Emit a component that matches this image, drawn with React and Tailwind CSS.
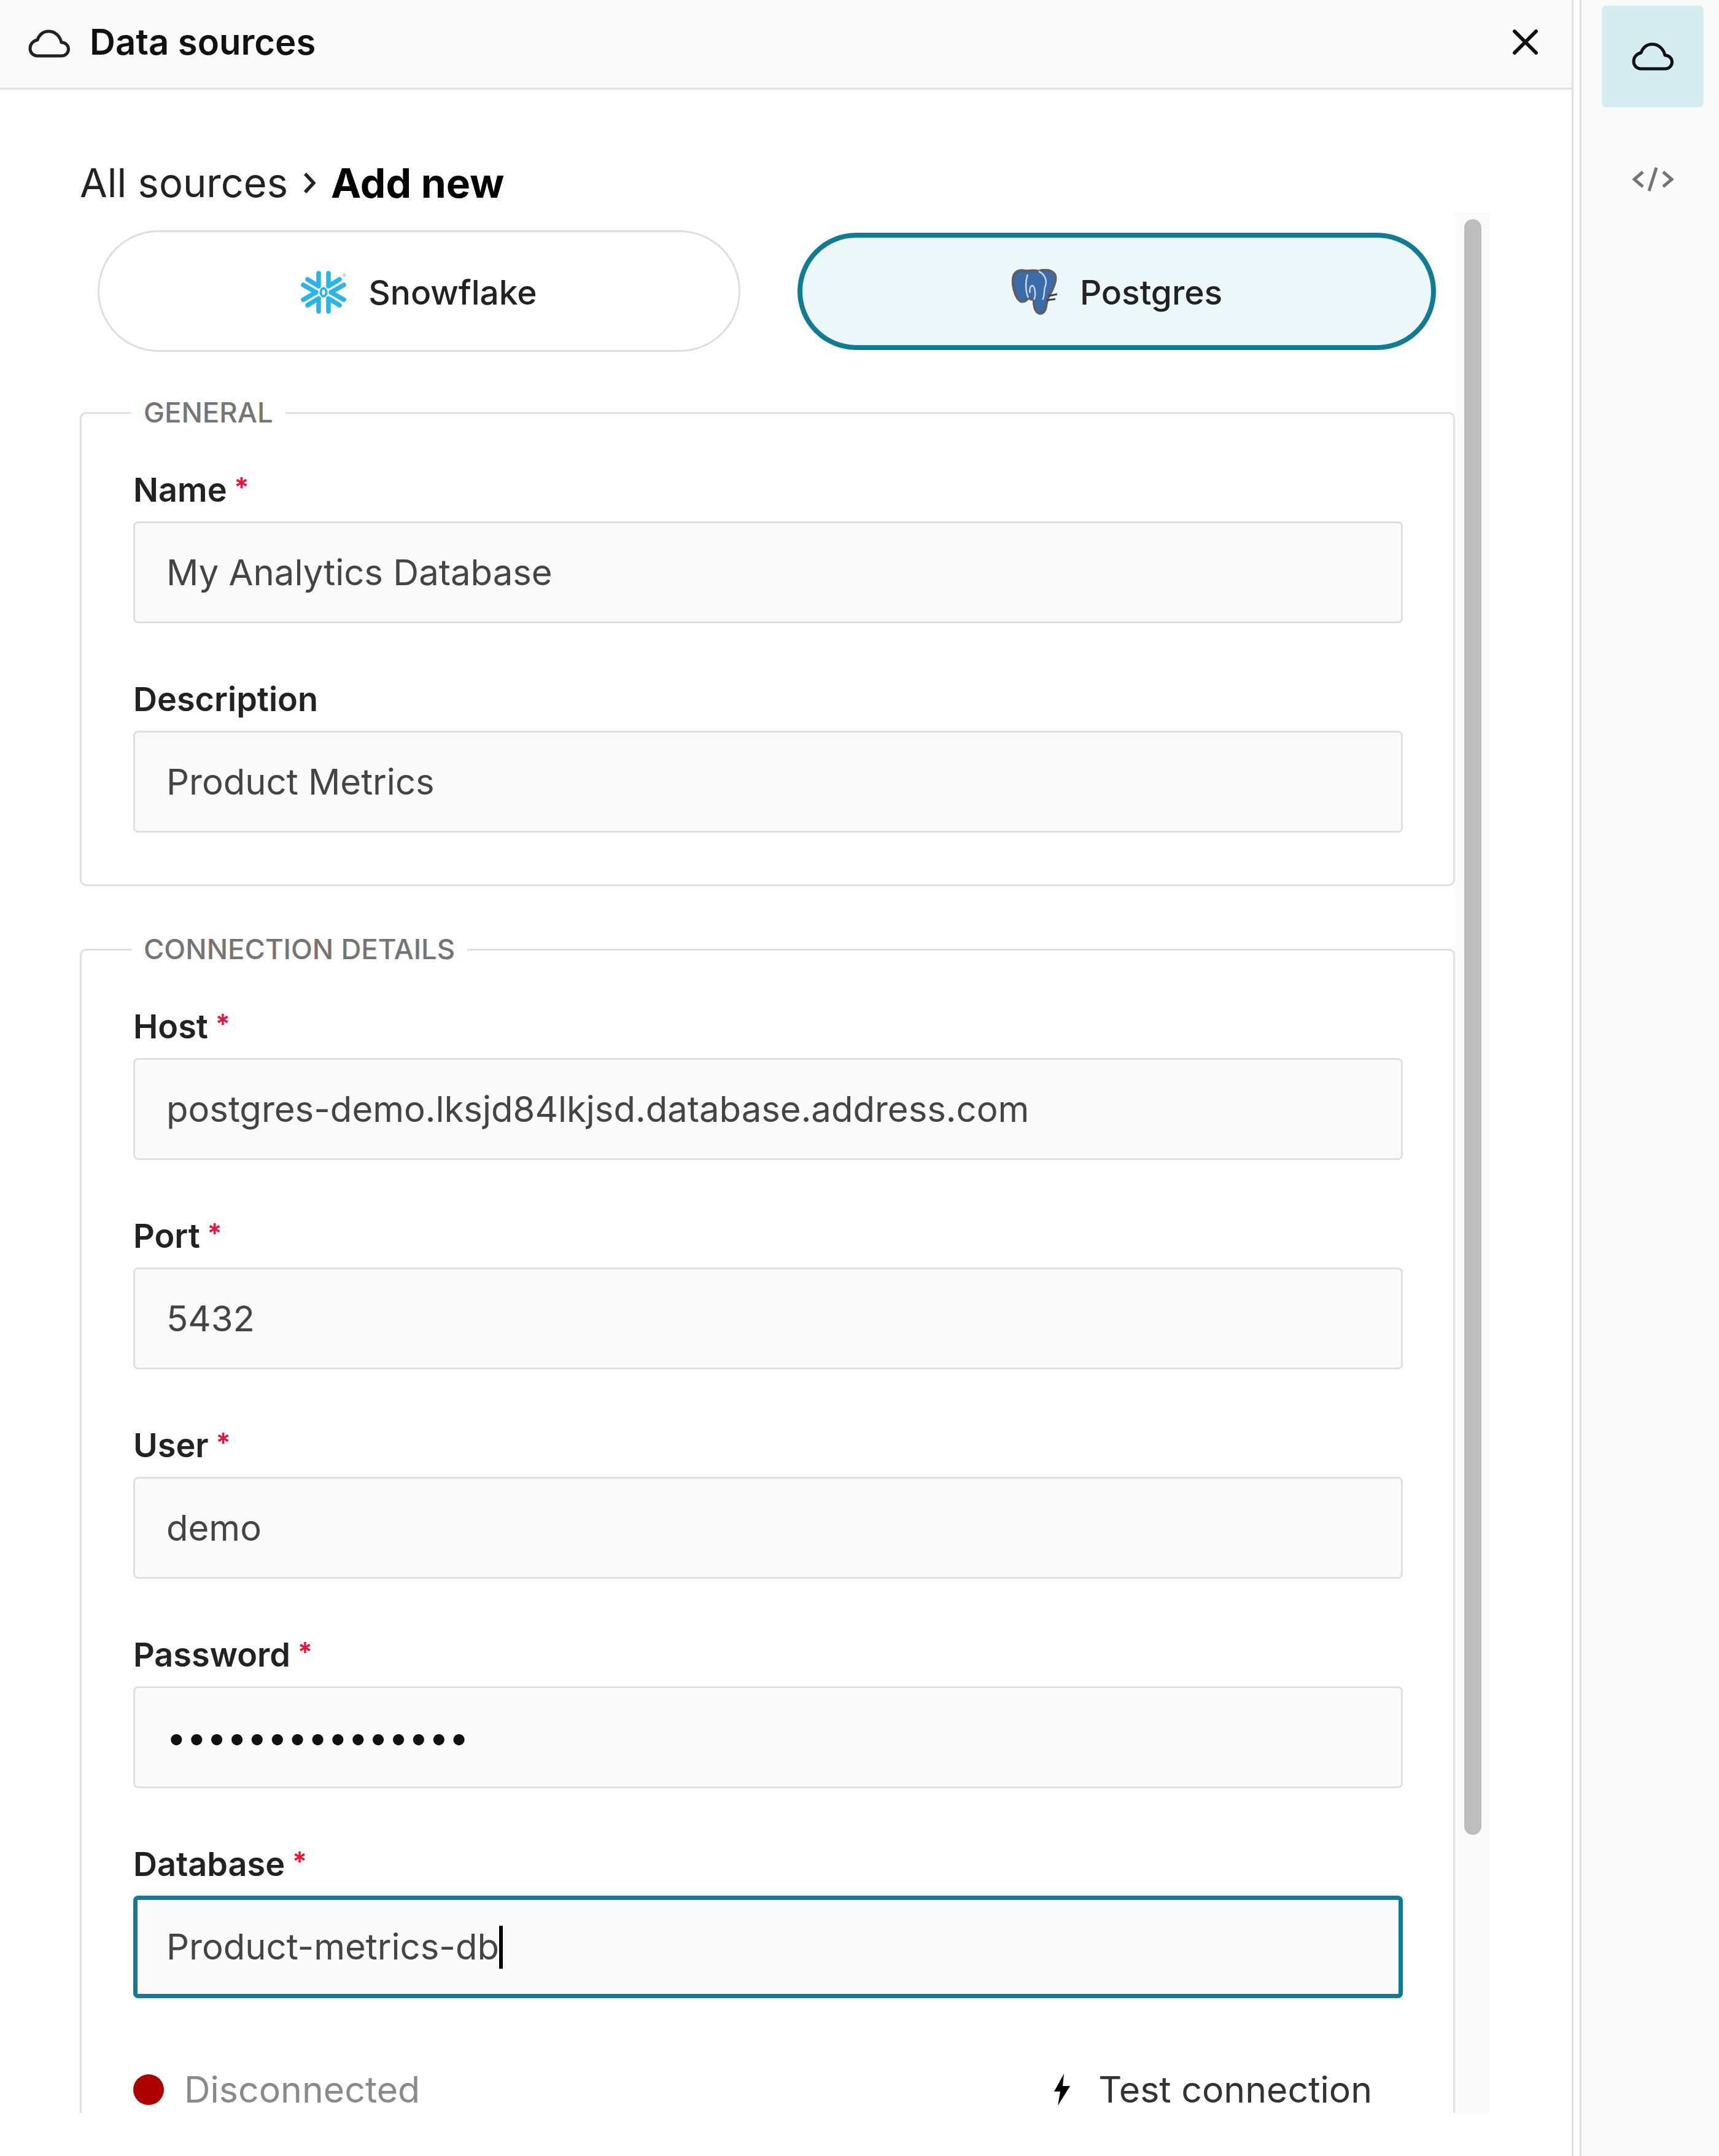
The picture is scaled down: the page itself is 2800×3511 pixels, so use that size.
const font = { fontFamily: "Inter, 'Liberation Sans', sans-serif" };

function CloudIcon({ className }) {
  return (
    <svg className={className} viewBox="0 0 68 46" fill="none" stroke="currentColor" strokeWidth="5" strokeLinejoin="round">
      <path d="M15 43 H54 C61 43 65.5 38 65.5 32 C65.5 26 60.5 21 54 21 C51.5 10 43 3 33 3 C24 3 17.5 9 15 17 C8 18.5 3 24 3 31 C3 38 8.5 43 15 43 Z" />
    </svg>
  );
}

function SnowflakeIcon() {
  return (
    <svg className="w-[74px] h-[74px] shrink-0" viewBox="0 0 74 74" fill="none" stroke="#29b5e8" strokeWidth="7.5" strokeLinecap="round" strokeLinejoin="round">
      <path d="M29 6 V27 L11 16" />
      <path d="M45 6 V27 L63 16" />
      <path d="M29 68 V47 L11 58" />
      <path d="M45 68 V47 L63 58" />
      <path d="M4 25 L25 37 L4 49" />
      <path d="M70 25 L49 37 L70 49" />
      <ellipse cx="37" cy="37" rx="4.5" ry="6.5" strokeWidth="4" />
      <circle cx="71" cy="9" r="1.5" strokeWidth="2" stroke="#9bdcf2" />
    </svg>
  );
}

function PostgresIcon() {
  return (
    <svg className="w-[76px] h-[76px] shrink-0" viewBox="0 0 76 76" fill="none">
      <path d="M22 3 C10 1 3 7 3 19 C3 33 9 51 17 53 C23 54 26 49 28 47 C31 49 33 50 37 50 C37 57 38 69 45 72 C53 74 56 67 57 59 C58 53 59 49 61 45 C69 31 75 17 71 9 C65 0 51 1 45 4 C37 1 30 4 22 3 Z" fill="#3a6cab" stroke="#5b5f66" strokeWidth="4.5" />
      <path d="M27 9 C23 20 23 36 28 47 M37 50 C41 43 39 30 35 27 C31 27 29 35 31 39 M45 4 C54 8 60 18 55 30 C53 37 55 45 51 50" stroke="#c9d6e8" strokeWidth="2.5" />
      <path d="M61 44 L75 41 M58 51 L72 49" stroke="#3d4046" strokeWidth="3" />
    </svg>
  );
}

function Field({ label, required, children, focused }) {
  return (
    <div className="flex flex-col">
      <div className="h-[64px] mb-[20px] flex items-center text-[54px] font-semibold text-[#222222] whitespace-nowrap">
        {label}
        {required && <span className="ml-[12px] text-[44px] font-semibold text-[#f0103c] -translate-y-[4px]">*</span>}
      </div>
      <div
        className={
          focused
            ? "h-[167px] flex items-center rounded-[8px] bg-[#fafafa] border-[7px] border-[#0f7c93] pl-[47px] text-[58px] text-[#444444] whitespace-nowrap"
            : "h-[166px] flex items-center rounded-[8px] bg-[#fafafa] border-[3px] border-[#e0e0e0] pl-[51px] text-[58px] text-[#444444] whitespace-nowrap"
        }
      >
        {children}
      </div>
    </div>
  );
}

function Group({ title, className, children }) {
  return (
    <fieldset className={"w-[2240px] border-[3px] border-[#e0e0e0] rounded-[10px] pl-[84px] pr-[82px] pt-[65px] pb-[84px] " + (className || "")}>
      <legend className="-ml-[3px] px-[20px] h-[56px] leading-[56px] text-[45.5px] font-medium text-[#757575] whitespace-nowrap">{title}</legend>
      <div className="flex flex-col gap-[91px]">{children}</div>
    </fieldset>
  );
}

export default function App() {
  return (
    <div style={font} className="w-[2800px] h-[3511px] flex bg-white overflow-hidden">
      <div className="w-[2563px] shrink-0 border-r-[3px] border-[#e0e0e0] flex flex-col">
        <header className="h-[146px] shrink-0 bg-[#fafafa] border-b-[3px] border-[#e0e0e0] flex items-center pl-[46px] pr-[55px] pb-[6px]">
          <CloudIcon className="w-[68px] h-[46px] text-[#222222] translate-y-[2px]" />
          <div className="ml-[32px] text-[58px] font-semibold text-[#111111]">Data sources</div>
          <svg className="ml-auto w-[41px] h-[41px] text-[#111111]" viewBox="0 0 41 41" fill="none" stroke="currentColor" strokeWidth="6" strokeLinecap="round">
            <path d="M3 3 L38 38 M38 3 L3 38" />
          </svg>
        </header>
        <div className="pl-[130px] pt-[112px]">
          <div className="h-[80px] flex items-center text-[65px] text-[#222222] whitespace-nowrap">
            All sources
            <svg className="mx-[25px] w-[20px] h-[36px] text-[#222222]" viewBox="0 0 20 36" fill="none" stroke="currentColor" strokeWidth="5.5">
              <path d="M3 3 L17 18 L3 33" />
            </svg>
            <span className="text-[66px] font-bold text-[#000000]">Add new</span>
          </div>
          <div className="mt-[8px] h-[3095px] flex overflow-hidden">
            <div className="w-[2240px] shrink-0">
              <div className="pt-[30px] h-[226px] flex items-center pl-[29px]">
                <div className="w-[1047px] h-[198px] pt-[4px] rounded-full border-[3px] border-[#dedede] bg-white flex items-center justify-center gap-[36px] text-[55px] font-medium text-[#222222]">
                  <SnowflakeIcon />
                  Snowflake
                </div>
                <div className="ml-[93px] w-[1040px] h-[191px] pt-[4px] rounded-full border-[8px] border-[#0f7c93] bg-[#ecf7fa] flex items-center justify-center gap-[36px] text-[55px] font-medium text-[#222222]">
                  <PostgresIcon />
                  Postgres
                </div>
              </div>
              <Group title="GENERAL" className="mt-[72px]">
                <Field label="Name" required>My Analytics Database</Field>
                <Field label="Description">Product Metrics</Field>
              </Group>
              <Group title="CONNECTION DETAILS" className="mt-[75px]">
                <Field label="Host" required>postgres-demo.lksjd84lkjsd.database.address.com</Field>
                <Field label="Port" required>5432</Field>
                <Field label="User" required>demo</Field>
                <Field label="Password" required>
                  <span className="tracking-[0.25px] text-[#111111]">•••••••••••••••</span>
                </Field>
                <Field label="Database" required focused>
                  Product-metrics-db
                  <span className="w-[6px] h-[70px] bg-[#000000]" />
                </Field>
                <div className="mt-[28px] h-[60px] flex items-center text-[59px] whitespace-nowrap">
                  <span className="w-[50px] h-[50px] rounded-full bg-[#ad0000]" />
                  <span className="ml-[33px] text-[#8a8a8a]">Disconnected</span>
                  <svg className="ml-auto w-[28px] h-[52px]" viewBox="0 0 28 52" fill="#000000">
                    <path d="M17 0 L1 29 H11 L7 52 L27 20 H15 Z" />
                  </svg>
                  <span className="ml-[45px] mr-[50px] text-[#333333]">Test connection</span>
                </div>
              </Group>
            </div>
            <div className="w-[55px] shrink-0 bg-[#fafafa] pl-[15px] pt-[11px]">
              <div className="w-[28px] h-[2631px] rounded-full bg-[#bdbdbd]" />
            </div>
          </div>
        </div>
      </div>
      <div className="ml-[10px] flex-1 border-l-[3px] border-[#e0e0e0] bg-[#fafafa] pl-[33px] pt-[9px] flex flex-col">
        <div className="w-[166px] h-[166px] rounded-[8px] bg-[#d5edf1] flex items-center justify-center">
          <CloudIcon className="w-[68px] h-[46px] text-[#111111]" />
        </div>
        <svg className="mt-[97px] ml-[50px] w-[67px] h-[40px] text-[#757575]" viewBox="0 0 67 40" fill="none" stroke="currentColor" strokeWidth="5">
          <path d="M17 8 L3 20 L17 32 M39 1 L27 39 M50 8 L64 20 L50 32" />
        </svg>
      </div>
    </div>
  );
}
